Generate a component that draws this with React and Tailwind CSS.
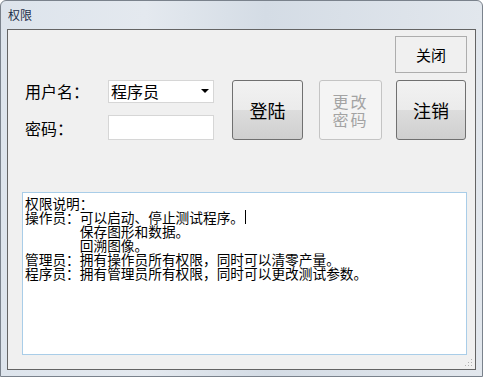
import React from "react";

const FONT = { fontFamily: '"Noto Sans CJK SC", "Noto Sans", sans-serif' };

const winBtn =
  "flex items-center justify-center rounded-[3px] border border-[#707070] bg-[linear-gradient(#f2f2f2,#ebebeb_50%,#dddddd_50%,#cfcfcf)] text-[18px] text-black";

export default function App() {
  return (
    <div
      className="w-[483px] h-[377px] flex flex-col rounded-t-[6px] border border-[#7a828c] bg-[linear-gradient(90deg,#dde4ec,#e4e9ef_30%,#d4dce5_55%,#e2e7ed)]"
      style={FONT}
    >
      {/* title bar */}
      <div className="h-[28px] flex items-center pl-[7px] text-[12px] text-[#1e2f4a] leading-none">
        权限
      </div>

      {/* client area */}
      <div className="mx-[6px] mb-[6px] flex-1 flex flex-col border border-[#646464] bg-[#f0f0f0] relative">
        <div className="flex justify-end pt-[6px] pr-[8px]">
          <button className="w-[72px] h-[37px] border border-[#adadad] bg-[#f0f0f0] text-[15px] text-black leading-none">
            关闭
          </button>
        </div>

        <div className="flex mt-[7px] pl-[17px]">
          <div className="flex flex-col">
            <div className="flex items-center h-[24px] -mt-[1px]">
              <span className="w-[83px] text-[16px] text-black leading-none">用户名：</span>
              <div className="w-[106px] h-[23px] bg-white border border-[#d6d6d6] flex items-center pl-[2px] pr-[4px]">
                <span className="flex-1 text-[16px] text-black leading-none">程序员</span>
                <span className="w-0 h-0 border-l-[4px] border-r-[4px] border-t-[4px] border-l-transparent border-r-transparent border-t-black" />
              </div>
            </div>
            <div className="flex items-center mt-[12px]">
              <span className="w-[83px] text-[16px] text-black leading-none">密码：</span>
              <div className="w-[106px] h-[25px] bg-white border border-[#d6d6d6]" />
            </div>
          </div>

          <button className={`${winBtn} w-[71px] h-[60px] ml-[18px]`}>登陆</button>
          <button className="w-[63px] h-[60px] ml-[16px] flex flex-col items-center justify-center rounded-[3px] border border-[#c4c4c4] bg-[#f4f4f4] text-[16px] leading-[18px] tracking-[2px] text-[#a3a3a3]">
            <span>更改</span>
            <span>密码</span>
          </button>
          <button className={`${winBtn} w-[70px] h-[60px] ml-[14px]`}>注销</button>
        </div>

        <div className="mt-[52px] ml-[14px] w-[445px] h-[163px] bg-white border border-[#a9cde8] px-[2px] pt-[3px] text-[13.7px] leading-[14px] text-black">
          <div>权限说明：</div>
          <div className="flex items-center">
            操作员：可以启动、停止测试程序。
            <span className="inline-block w-[1px] h-[14px] bg-black ml-[1px]" />
          </div>
          <div className="pl-[4em]">保存图形和数据。</div>
          <div className="pl-[4em]">回溯图像。</div>
          <div>管理员：拥有操作员所有权限，同时可以清零产量。</div>
          <div>程序员：拥有管理员所有权限，同时可以更改测试参数。</div>
        </div>

        {/* resize grip */}
        <svg className="absolute right-[2px] bottom-[2px]" width="8" height="8" viewBox="0 0 8 8">
          <rect x="6" y="0" width="1" height="1" fill="#b0b0b0" />
          <rect x="3" y="3" width="1" height="1" fill="#b0b0b0" />
          <rect x="6" y="3" width="1" height="1" fill="#b0b0b0" />
          <rect x="0" y="6" width="1" height="1" fill="#b0b0b0" />
          <rect x="3" y="6" width="1" height="1" fill="#b0b0b0" />
          <rect x="6" y="6" width="1" height="1" fill="#b0b0b0" />
        </svg>
      </div>
    </div>
  );
}
